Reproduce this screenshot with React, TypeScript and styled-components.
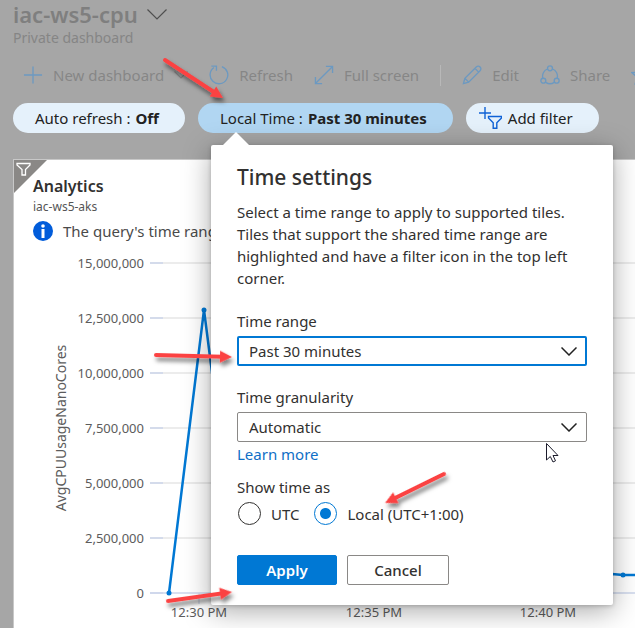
import React from "react";
import styled, { createGlobalStyle, css } from "styled-components";

const GlobalStyle = createGlobalStyle`
  * { box-sizing: border-box; }
  body {
    margin: 0;
    background: #a6a6a6;
    color: #323130;
    font-family: "Noto Sans", "Open Sans", sans-serif;
    font-size: 15px;
    line-height: 20px;
  }
  button, select, input { font: inherit; color: inherit; margin: 0; }
`;

const Page = styled.div`
  position: relative;
  display: flex;
  flex-direction: column;
  height: 100vh;
  overflow: hidden;
  padding-left: 13px;
`;

const Header = styled.header`
  display: flex;
  flex: none;
  flex-direction: column;
  color: #858585;
`;

const TitleRow = styled.div`
  display: flex;
  align-items: center;
  gap: 9px;
  height: 28px;
`;

const Title = styled.h1`
  margin: 0;
  font-size: 22px;
  line-height: 28px;
  font-weight: 600;
  color: #7f7f7f;
`;

const IconButton = styled.button`
  display: flex;
  padding: 0;
  border: 0;
  background: none;
  color: #4f4f4f;
`;

const Subtitle = styled.p`
  margin: 0;
  font-size: 14px;
  line-height: 20px;
`;

const Toolbar = styled.nav`
  display: flex;
  flex: none;
  align-items: center;
  gap: 21px;
  height: 30px;
  margin-top: 12px;
  padding-left: 10px;
`;

const ToolButton = styled.button`
  display: flex;
  flex: none;
  align-items: center;
  gap: 10px;
  padding: 0;
  border: 0;
  background: none;
  color: #868686;
  white-space: nowrap;

  svg { flex: none; }
  svg:first-child { color: #6c99c1; }
`;

const Divider = styled.span`
  flex: none;
  width: 1px;
  height: 21px;
  background: #b8b8b8;
`;

const Pills = styled.div`
  display: flex;
  flex: none;
  gap: 13px;
  margin-top: 13px;
`;

const PillAnchor = styled.div`
  position: relative;
  z-index: 2;
`;

const Pill = styled.button<{ $active?: boolean; $icon?: boolean }>`
  display: flex;
  align-items: center;
  gap: ${(p) => (p.$icon ? "6px" : "5px")};
  height: 30px;
  padding: ${(p) => (p.$icon ? "0 26px 0 13px" : "0 26px 0 22px")};
  border: 0;
  border-radius: 15px;
  background: ${(p) => (p.$active ? "#b1d6f2" : "#e5f1fb")};
  color: #222;
  white-space: nowrap;
`;

const Popover = styled.form`
  position: absolute;
  top: 42px;
  left: 13px;
  width: 402px;
  padding: 17px 26px 20px;
  border-radius: 2px;
  background: #fff;
  box-shadow: 0 6px 28px rgba(0, 0, 0, 0.34), 0 1px 4px rgba(0, 0, 0, 0.2);
`;

const Caret = styled.svg`
  position: absolute;
  top: -13px;
  left: 11px;
`;

const PopoverTitle = styled.h2`
  margin: 0 0 9px;
  font-size: 21px;
  line-height: 30px;
  font-weight: 500;
`;

const Description = styled.p`
  margin: 0;
  padding-bottom: 1px;
  line-height: 22px;
`;

const Field = styled.div`
  display: flex;
  flex-direction: column;
  margin-top: 20px;

  label { line-height: 22px; margin-bottom: 4px; }
`;

const SelectBox = styled.div`
  position: relative;
  display: flex;

  svg { position: absolute; right: 10px; top: 11px; pointer-events: none; color: #222; }
`;

const Select = styled.select<{ $focused?: boolean }>`
  appearance: none;
  flex: 1;
  height: 30px;
  padding: 0 36px 0 ${(p) => (p.$focused ? "10px" : "11px")};
  border-radius: 2px;
  background: #fff;
  outline: 0;
  ${(p) => p.$focused
    ? css`border: 2px solid #0078d4;`
    : css`border: 1px solid #8a8886;`}
`;

const Link = styled.a`
  display: block;
  width: max-content;
  margin-top: 2px;
  color: #0f6fc6;
  text-decoration: none;
`;

const RadioGroup = styled.fieldset`
  margin: 13px 0 0;
  padding: 0;
  border: 0;

  legend { padding: 0; line-height: 20px; }
`;

const RadioRow = styled.div`
  display: flex;
  gap: 15px;
  margin-top: 5px;
  padding-left: 1px;
`;

const RadioLabel = styled.label`
  display: flex;
  align-items: center;
  gap: 10px;
`;

const Radio = styled.input`
  appearance: none;
  width: 23px;
  height: 23px;
  border: 1px solid #323130;
  border-radius: 50%;

  &:checked {
    border-color: #0078d4;
    background: radial-gradient(circle, #0078d4 5px, #fff 6px);
  }
`;

const Actions = styled.div`
  display: flex;
  gap: 10px;
  margin-top: 30px;
`;

const ActionButton = styled.button<{ $primary?: boolean }>`
  width: ${(p) => (p.$primary ? "100px" : "102px")};
  height: 30px;
  padding: 0;
  border: 1px solid ${(p) => (p.$primary ? "#0078d4" : "#8a8886")};
  border-radius: 2px;
  background: ${(p) => (p.$primary ? "#0078d4" : "#fff")};
  color: ${(p) => (p.$primary ? "#fff" : "#323130")};
  font-weight: ${(p) => (p.$primary ? 600 : 500)};
`;

const Tile = styled.section`
  position: relative;
  display: flex;
  flex-direction: column;
  flex: 1 0 auto;
  margin-top: 26px;
  border-left: 1px solid #c8c8c8;
  border-top: 1px solid #c8c8c8;
  background: #fff;
`;

const CornerFilter = styled.svg`
  position: absolute;
  top: 0;
  left: 0;
`;

const TileTitle = styled.h2`
  margin: 14px 0 0 19px;
  font-size: 16px;
  line-height: 24px;
  font-weight: 600;
`;

const TileSubtitle = styled.p`
  margin: 0 0 0 19px;
  font-size: 12px;
  line-height: 18px;
  color: #555;
`;

const Notice = styled.p`
  display: flex;
  align-items: center;
  gap: 10px;
  margin: 5px 0 0 19px;
  color: #4a4a4a;
  white-space: nowrap;
`;

const Chart = styled.svg`
  display: block;
  width: 100%;
  height: 388px;
  font-size: 13px;
  fill: #5c5c5c;
`;

const AxisTitle = styled.text`
  font-size: 14px;
`;

const Annotations = styled.svg`
  position: absolute;
  inset: 0;
  z-index: 3;
  width: 100%;
  height: 100%;
  pointer-events: none;
`;

function Chevron({ width = 16, height = 9, stroke = 1.5 }: { width?: number; height?: number; stroke?: number }) {
  return (
    <svg width={width} height={height} viewBox={`0 0 ${width} ${height}`} fill="none" stroke="currentColor" strokeWidth={stroke}>
      <path d={`M0.5 0.5L${width / 2} ${height - 1}L${width - 0.5} 0.5`} />
    </svg>
  );
}

const toolIcons = {
  plus: <path d="M10.500 1.500V19.500M1 10.500H20" />,
  refresh: <path d="M13.500 1.600A9.300 9.300 0 1 1 5.200 2.700M2.500 1.200H7.800V6" />,
  expand: <path d="M1.500 19.500L19.500 1.500M12.500 1.500H19.500V8.500M1.500 12.500V19.500H8.500" />,
  pencil: <path d="M1.500 19.500L3 14L15 2A2.700 2.700 0 0 1 19 6L7 18ZM3 14L7 18M13.500 3.500L17.500 7.500" />,
  share: (
    <>
      <circle cx="10.500" cy="3.500" r="2.600" />
      <circle cx="3.500" cy="16.500" r="2.600" />
      <circle cx="17.500" cy="16.500" r="2.600" />
      <path d="M7.800 4.200A8 8 0 0 0 3 13.800M13.200 4.200A8 8 0 0 1 18 13.800M6 18.200A8 8 0 0 0 15 18.200" />
    </>
  ),
  star: <path d="M10.500 1L13.200 7.500L20 8L14.800 12.500L16.500 19.500L10.500 15.800L4.500 19.500L6.200 12.500L1 8L7.800 7.500Z" />,
};

function ToolIcon({ name }: { name: keyof typeof toolIcons }) {
  return (
    <svg width="20" height="20" viewBox="0 0 21 21" fill="none" stroke="currentColor" strokeWidth="1.400">
      {toolIcons[name]}
    </svg>
  );
}

const yTicks = ["15,000,000", "12,500,000", "10,000,000", "7,500,000", "5,000,000", "2,500,000", "0"];
const xTicks = [
  { x: 185, label: "12:30 PM" },
  { x: 360, label: "12:35 PM" },
  { x: 534, label: "12:40 PM" },
];

function UsageChart() {
  return (
    <Chart role="img" aria-label="AvgCPUUsageNanoCores over time">
      {yTicks.map((label, i) => {
        const y = 22 + i * 55;
        return (
          <g key={label}>
            <line x1="136" x2="100%" y1={y} y2={y} stroke={i === 6 ? "#ccd6eb" : "#e6e6e6"} strokeWidth="1.500" />
            <line x1="136" x2="149" y1={y} y2={y} stroke="#ccd6eb" strokeWidth="1.500" />
            <text x="130" y={y + 5} textAnchor="end">{label}</text>
          </g>
        );
      })}
      {xTicks.map(({ x, label }) => (
        <g key={label}>
          <line x1={x} x2={x} y1="352" y2="363" stroke="#ccd6eb" />
          <text x={x} y="376" textAnchor="middle">{label}</text>
        </g>
      ))}
      <AxisTitle x="52" y="187" textAnchor="middle" transform="rotate(-90 52 187)">AvgCPUUsageNanoCores</AxisTitle>
      <g fill="none" stroke="#0078d4" strokeWidth="2.500" strokeLinejoin="round">
        <path d="M155 352L190 69L224 334L598 333L609 334L660 334" />
      </g>
      <g fill="#0078d4">
        <circle cx="155" cy="352" r="2.500" />
        <circle cx="190" cy="69" r="2.500" />
        <circle cx="609" cy="334" r="2.500" />
      </g>
    </Chart>
  );
}

const arrows = [
  { from: [165, 60], to: [223, 98] },
  { from: [156, 355], to: [232, 357] },
  { from: [444, 474], to: [385, 503] },
  { from: [168, 601], to: [232, 592] },
];

function Arrow({ from, to }: { from: number[]; to: number[] }) {
  const length = Math.hypot(to[0] - from[0], to[1] - from[1]);
  const angle = (Math.atan2(to[1] - from[1], to[0] - from[0]) * 180) / Math.PI;
  return (
    <g transform={`translate(${from[0]} ${from[1]}) rotate(${angle})`}>
      <line x1="0" x2={length - 10} y1="0" y2="0" stroke="#fb4343" strokeWidth="4" strokeLinecap="round" />
      <path d={`M${length} 0L${length - 12} -6V6Z`} fill="#fb4343" />
    </g>
  );
}

export default function App() {
  return (
    <Page>
      <GlobalStyle />
      <Header>
        <TitleRow>
          <Title>iac-ws5-cpu</Title>
          <IconButton aria-label="Switch dashboard"><Chevron width={20} height={11} stroke={1.2} /></IconButton>
        </TitleRow>
        <Subtitle>Private dashboard</Subtitle>
      </Header>
      <Toolbar>
        <ToolButton><ToolIcon name="plus" />New dashboard<Chevron width={14} height={8} stroke={1.2} /></ToolButton>
        <ToolButton><ToolIcon name="refresh" />Refresh</ToolButton>
        <ToolButton><ToolIcon name="expand" />Full screen</ToolButton>
        <Divider />
        <ToolButton><ToolIcon name="pencil" />Edit</ToolButton>
        <ToolButton><ToolIcon name="share" />Share</ToolButton>
        <ToolButton aria-label="Favorite"><ToolIcon name="star" /></ToolButton>
      </Toolbar>
      <Pills>
        <Pill>Auto refresh : <b>Off</b></Pill>
        <PillAnchor>
          <Pill $active>Local Time : <b>Past 30 minutes</b></Pill>
          <Popover onSubmit={(e) => e.preventDefault()}>
            <Caret width="28" height="14" viewBox="0 0 28 14"><path d="M0 14L14 0L28 14Z" fill="#fff" /></Caret>
            <PopoverTitle>Time settings</PopoverTitle>
            <Description>
              Select a time range to apply to supported tiles. Tiles that support the shared time range are
              highlighted and have a filter icon in the top left corner.
            </Description>
            <Field>
              <label htmlFor="range">Time range</label>
              <SelectBox>
                <Select id="range" $focused><option>Past 30 minutes</option></Select>
                <Chevron />
              </SelectBox>
            </Field>
            <Field>
              <label htmlFor="granularity">Time granularity</label>
              <SelectBox>
                <Select id="granularity"><option>Automatic</option></Select>
                <Chevron />
              </SelectBox>
            </Field>
            <Link href="#learn">Learn more</Link>
            <RadioGroup>
              <legend>Show time as</legend>
              <RadioRow>
                <RadioLabel><Radio type="radio" name="zone" />UTC</RadioLabel>
                <RadioLabel><Radio type="radio" name="zone" defaultChecked />Local (UTC+1:00)</RadioLabel>
              </RadioRow>
            </RadioGroup>
            <Actions>
              <ActionButton $primary type="submit">Apply</ActionButton>
              <ActionButton type="button">Cancel</ActionButton>
            </Actions>
          </Popover>
        </PillAnchor>
        <Pill $icon>
          <svg width="23" height="22" viewBox="0 0 23 22" fill="none" stroke="#0f62d6" strokeWidth="1.400">
            <path d="M6 0V12M0 6H12M9.500 9.500H22.500V11L17.800 15.800V21.300H14.200V15.800L9.500 11Z" />
          </svg>
          Add filter
        </Pill>
      </Pills>
      <Tile>
        <CornerFilter width="33" height="33" viewBox="0 0 33 33">
          <path d="M0 0H33L0 33Z" fill="#8a8886" />
          <path d="M3 3.500H16V5L11.500 9.500V15H8V9.500L3 5Z" fill="none" stroke="#fff" strokeWidth="1.300" />
        </CornerFilter>
        <TileTitle>Analytics</TileTitle>
        <TileSubtitle>iac-ws5-aks</TileSubtitle>
        <Notice>
          <svg width="20" height="20" viewBox="0 0 20 20">
            <circle cx="10" cy="10" r="10" fill="#015cda" />
            <circle cx="10" cy="5" r="1.800" fill="#fff" />
            <rect x="8.500" y="8" width="3" height="9" fill="#fff" />
          </svg>
          The query's time range
        </Notice>
        <UsageChart />
      </Tile>
      <Annotations aria-hidden="true">
        <defs>
          <filter id="arrow-shadow" x="-20%" y="-20%" width="140%" height="140%">
            <feDropShadow dx="2" dy="4" stdDeviation="2" floodColor="#000" floodOpacity="0.5" />
          </filter>
        </defs>
        <g filter="url(#arrow-shadow)">
          {arrows.map((arrow) => <Arrow key={arrow.from.join()} {...arrow} />)}
        </g>
        <path d="M546.500 443.500V460L550.300 456.500L553 462L555.500 460.800L553 455.500H558Z" fill="#fff" stroke="#1b1b2b" />
      </Annotations>
    </Page>
  );
}
